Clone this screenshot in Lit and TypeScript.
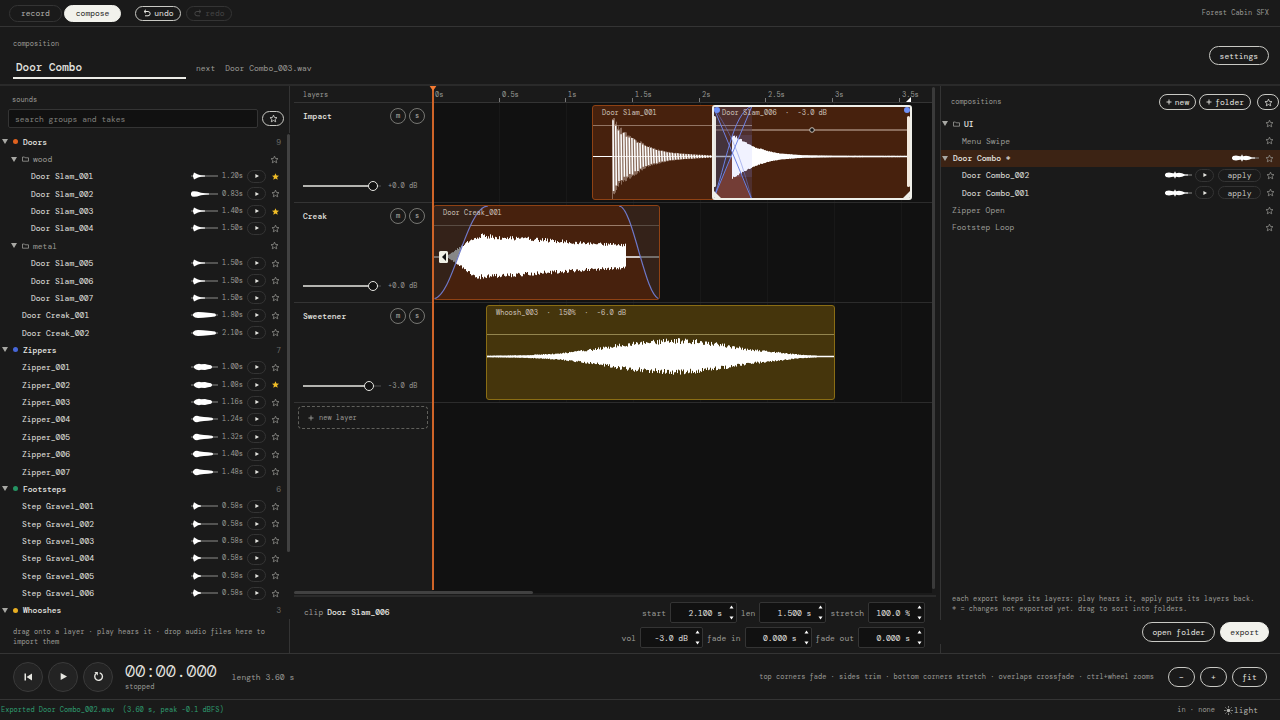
import { LitElement, html, svg, css } from "lit";
import { customElement, state } from "lit/decorators.js";
import { classMap } from "lit/directives/class-map.js";
import { styleMap } from "lit/directives/style-map.js";

type Point = [number, number];

/* ---------- icons ---------- */

const star = (on = false) => html`<svg class=${classMap({ star: true, on })} viewBox="0 0 24 24" width="9" height="9">
  <path d="M12 3l2.7 6.2 6.7.6-5.1 4.4 1.6 6.6L12 17.300l-5.900 3.500 1.600-6.600-5.100-4.400 6.700-.600z"/></svg>`;
const caret = html`<svg class="caret" viewBox="0 0 6 5" width="6" height="5"><path d="M0 0h6L3 5z"/></svg>`;
const folder = html`<svg class="folder" viewBox="0 0 7 6" width="7" height="6"><path d="M.5 1h2l.7.8h3.300v3.400h-6z"/></svg>`;
const playIcon = (size: number) => html`<svg viewBox="0 0 10 10" width=${size} height=${size}><path d="M1 0l9 5-9 5z" fill="currentColor"/></svg>`;
const plusIcon = html`<svg viewBox="0 0 6 6" width="6" height="6"><path d="M3 .5v5M.5 3h5" stroke="currentColor" stroke-width=".9" fill="none"/></svg>`;
const undoIcon = html`<svg viewBox="0 0 16 16" width="8" height="8"><path d="M6 1.500L2 5l4 3.500M2.500 5H10a4.300 4.300 0 0 1 0 8.600H4" fill="none" stroke="currentColor" stroke-width="2"/></svg>`;
const redoIcon = html`<svg viewBox="0 0 16 16" width="8" height="8"><path d="M10 1.500L14 5l-4 3.500M13.500 5H6a4.300 4.300 0 0 0 0 8.600h6" fill="none" stroke="currentColor" stroke-width="2"/></svg>`;
const startIcon = html`<svg viewBox="0 0 8 8" width="8" height="8"><path d="M.5.5h1.500v7H.5zM8 .5v7L2.500 4z" fill="currentColor"/></svg>`;
const loopIcon = html`<svg viewBox="0 0 12 12" width="11" height="11"><path d="M3.400 2.800A4.200 4.200 0 1 0 7.300 2" fill="none" stroke="currentColor" stroke-width="1.500"/><path d="M1.500 1.200h3.800V5z" fill="currentColor"/></svg>`;
const sunIcon = html`<svg viewBox="0 0 10 10" width="9" height="9"><circle cx="5" cy="5" r="2" fill="currentColor"/><path d="M5 0v2M5 8v2M0 5h2M8 5h2M1.500 1.500l1.300 1.300M7.200 7.200l1.300 1.300M1.500 8.500l1.300-1.300M7.200 2.800l1.300-1.300" stroke="currentColor" stroke-width=".8"/></svg>`;

/* ---------- waveforms ---------- */

const shapes: Record<string, Point[]> = {
  slam: [[2, 0.5], [3, 3.5], [5, 2.5], [7, 1.5], [10, 0.8], [14, 0.5]],
  burst: [[0, 1], [1, 2.5], [3, 2.7], [6, 2.5], [10, 1.3], [14, 0.7], [18, 0.5]],
  creak: [[2, 1], [4, 2.5], [7, 3], [12, 2.8], [20, 2], [24, 1.5], [25, 0.5]],
  zip: [[3, 1], [5, 2.5], [8, 3.3], [10, 2.7], [14, 3], [17, 2.3], [20, 1.7], [21, 0.5]],
  zipLong: [[2, 1], [4, 3], [6, 3.2], [9, 2.5], [13, 2], [17, 1.8], [21, 1.2], [22, 0.5]],
  step: [[2, 0.5], [3, 3.7], [5, 2.5], [7, 1.3], [10, 0.5]],
  combo: [[0, 0.5], [1, 2], [4, 2.6], [8, 1.8], [9, 1.8], [10, 3.7], [11, 1.8], [14, 2.2], [17, 1.8], [20, 0.6], [23, 0.5]],
};

const mini = (kind: string) => {
  const pts = shapes[kind];
  const top = pts.map(([x, a]) => `${x},${5 - a}`);
  const low = [...pts].reverse().map(([x, a]) => `${x},${5 + a}`);
  return html`<svg class="mini" viewBox="0 0 27 10" width="27" height="10">
    <path d="M0 5h27" stroke="#8c8c8a"/><polygon points=${[...top, ...low].join(" ")} fill="#fff"/></svg>`;
};

const noise = (n: number) => {
  const v = Math.sin(n * 127.1 + 11.7) * 43758.5453;
  return v - Math.floor(v);
};

const level = (env: Point[], x: number) => {
  for (let i = 1; i < env.length; i++) {
    const [x0, a0] = env[i - 1];
    const [x1, a1] = env[i];
    if (x <= x1) return a0 + ((a1 - a0) * (x - x0)) / (x1 - x0);
  }
  return 0;
};

/* One bar per pixel, mirrored about the centre line with separate jitter above and below. */
const bars = (env: Point[], mid: number, jitter: number) => {
  let d = "";
  for (let x = env[0][0]; x <= env[env.length - 1][0]; x++) {
    const a = level(env, x);
    const up = a * (1 + (noise(x) - 0.4) * jitter);
    const dn = a * (1 + (noise(x + 900) - 0.4) * jitter);
    d += `M${x + 0.5} ${(mid - up).toFixed(1)}V${(mid + dn).toFixed(1)}`;
  }
  return d;
};

/* Low-frequency content still shows separate cycles at this zoom. */
const cycles = (env: Point[], mid: number) => {
  let d = "";
  const end = env[env.length - 1][0];
  for (let x = env[0][0] + 1, i = 0; x <= end; x += 2.7, i++) {
    const up = level(env, x) * (0.85 + noise(i) * 0.15);
    const dn = level(env, x + 1) * (0.85 + noise(i + 50) * 0.15);
    d += `M${x.toFixed(1)} ${(mid - up).toFixed(1)}L${(x + 0.6).toFixed(1)} ${(mid + dn).toFixed(1)}`;
  }
  return d;
};

const slamOneEnv: Point[] = [[20, 40], [22, 36], [25, 29], [30, 25], [38, 20], [46, 15], [55, 10], [65, 7], [78, 4], [94, 2.5], [120, 1]];
const slamSixEnv: Point[] = [[20, 21], [26, 18], [33, 14], [43, 9], [57, 5], [68, 3], [90, 1.3], [120, 0.7], [198, 0.5]];
const creakEnv: Point[] = [[14, 1], [22, 6], [28, 10], [37, 16], [46, 20], [60, 19], [110, 16], [150, 13], [192, 11]];
const whooshEnv: Point[] = [[0, 0.6], [40, 1.2], [75, 3], [110, 7], [135, 11], [160, 13.5], [190, 15], [210, 14], [235, 11], [260, 7], [290, 4], [315, 1.5], [330, 0.8]];

/* ---------- data ---------- */

interface Take { name: string; wave: string; len: string; fav?: boolean }
type Row =
  | { kind: "group"; name: string; color: string; count: number }
  | { kind: "folder"; name: string }
  | ({ kind: "take"; deep: boolean } & Take);

const take = (name: string, wave: string, len: string, deep = false, fav = false): Row => ({ kind: "take", name, wave, len, deep, fav });

const library: Row[] = [
  { kind: "group", name: "Doors", color: "#e0621f", count: 9 },
  { kind: "folder", name: "wood" },
  take("Door Slam_001", "slam", "1.20s", true, true),
  take("Door Slam_002", "burst", "0.83s", true),
  take("Door Slam_003", "slam", "1.40s", true, true),
  take("Door Slam_004", "slam", "1.50s", true),
  { kind: "folder", name: "metal" },
  take("Door Slam_005", "slam", "1.50s", true),
  take("Door Slam_006", "slam", "1.50s", true),
  take("Door Slam_007", "slam", "1.50s", true),
  take("Door Creak_001", "creak", "1.80s"),
  take("Door Creak_002", "creak", "2.10s"),
  { kind: "group", name: "Zippers", color: "#4666d8", count: 7 },
  take("Zipper_001", "zip", "1.00s"),
  take("Zipper_002", "zip", "1.08s", false, true),
  take("Zipper_003", "zip", "1.16s"),
  take("Zipper_004", "zipLong", "1.24s"),
  take("Zipper_005", "zipLong", "1.32s"),
  take("Zipper_006", "zipLong", "1.40s"),
  take("Zipper_007", "zipLong", "1.48s"),
  { kind: "group", name: "Footsteps", color: "#259463", count: 6 },
  ...[1, 2, 3, 4, 5, 6].map((n) => take(`Step Gravel_00${n}`, "step", "0.58s")),
  { kind: "group", name: "Whooshes", color: "#e8ae22", count: 3 },
];

const PX_PER_SECOND = 400 / 3;
const at = (seconds: number) => Math.round(seconds * PX_PER_SECOND);
const ticks = [0, 0.5, 1, 1.5, 2, 2.5, 3, 3.5];

@customElement("app-root")
export class AppRoot extends LitElement {
  @state() private mode: "record" | "compose" = "compose";

  static styles = css`
    :host {
      display: grid;
      grid-template-rows: 27px 59px minmax(0, 1fr) 47px 20px;
      height: 100vh;
      box-sizing: border-box;
      background: #1a1a1a;
      color: #e6e6e1;
      font: 8px/12px "DM Mono", "Liberation Mono", monospace;
      overflow: hidden;
    }
    *, *::before, *::after { box-sizing: border-box; }
    svg { display: block; flex: none; }
    button, input { font: inherit; color: inherit; margin: 0; }
    button {
      display: inline-flex; align-items: center; justify-content: center; gap: 3px;
      background: none; border: 1px solid #c9c9c4; border-radius: 10px; padding: 0 10px;
      white-space: nowrap; flex: none;
    }
    .spacer { flex: 1; }
    .small { font-size: 7px; line-height: 10px; }
    .dim { color: #9c9c98; }
    .strong { font-weight: 500; }

    .topbar { display: flex; align-items: center; padding: 0 11px 0 9px; border-bottom: 1px solid #343434; }
    .tab { height: 17px; padding: 0 11px; border-color: #343434; color: #b4b4b0; }
    .tab.active { background: #f2f2ec; border-color: #f2f2ec; color: #1a1a1a; margin-left: 2px; }
    .history { height: 15px; width: 46px; padding: 0; margin-left: 5px; }
    .history.first { margin-left: 14px; }
    .history:disabled { border-color: #343434; color: #454545; }

    .header { display: flex; align-items: center; padding: 0 11px 0 13px; border-bottom: 2px solid #2a2a2a; }
    .naming { display: grid; grid-template-columns: 173px auto auto; column-gap: 10px; row-gap: 8px; align-items: center; padding-top: 6px; }
    .naming label { grid-column: 1 / -1; }
    .title { width: 100%; height: 22px; padding: 0 3px; border: 0; border-bottom: 2px solid #ededE8; background: none; font-size: 11px; font-weight: 500; outline: none; }
    .settings { height: 19px; }

    .main { display: grid; grid-template-columns: 290px minmax(0, 1fr) 340px; min-height: 0; }
    .sounds { display: flex; flex-direction: column; border-right: 1px solid #343434; min-height: 0; }
    .sounds h2, .comps h2 { margin: 0; font-weight: normal; }
    .sounds h2 { padding: 9px 12px 4px; }
    .search { display: flex; align-items: center; gap: 4px; padding: 0 5px 0 8px; }
    .search input { flex: 1; min-width: 0; height: 19px; padding: 0 6px; background: #111; border: 1px solid #343434; border-radius: 2px; outline: none; }
    .search input::placeholder { color: #83837f; opacity: 1; }
    .starbtn { width: 22px; height: 15px; padding: 0; }
    .star { fill: none; stroke: #92928e; stroke-width: 2; }
    .starbtn .star { stroke: #e6e6e1; }
    .star.on { fill: #f0bd27; stroke: #f0bd27; stroke-width: 0; }
    .caret { fill: #a8a8a4; }
    .folder { fill: none; stroke: #9c9c98; stroke-width: .8; }

    .list { position: relative; flex: 1; display: flex; flex-direction: column; min-height: 0; margin: 5px -1px 0 0; padding-right: 9px; background: #1a1a1a; }
    .thumb { position: absolute; right: 0; top: 1px; width: 3px; height: 86%; background: #414141; border-radius: 2px; }
    .row { flex: 1 1 0; min-height: 0; display: flex; align-items: center; }
    .row.group { padding-left: 2px; }
    .row.sub { padding-left: 11px; }
    .row.deep { padding-left: 31px; }
    .row.shallow { padding-left: 22px; }
    .dot { width: 5px; height: 5px; border-radius: 50%; margin: 0 5px 0 5px; }
    .row .folder { margin: 0 4px 0 5px; }
    .row.sub .star { margin-right: 2px; }
    .name { flex: 1; white-space: nowrap; }
    .count { color: #6c6c69; }
    .len { width: 25px; text-align: right; }
    .play { width: 19px; height: 13px; padding: 0; border-color: #343434; margin: 0 5px 0 4px; }
    .row .play + .star { margin-right: 1px; }
    .hint { margin: 0; padding: 8px 8px 6px 13px; }

    .centre { display: flex; flex-direction: column; min-width: 0; padding-left: 4px; }
    .timeline { position: relative; flex: 1; display: grid; grid-template-columns: 139px minmax(0, 1fr); grid-template-rows: 17px 100px 100px 100px minmax(0, 1fr); margin-right: 8px; min-height: 0; overflow: hidden; }
    .corner { padding: 4px 9px 0; border-bottom: 1px solid #343434; }
    .ruler { position: relative; border-bottom: 1px solid #343434; }
    .tick { position: absolute; bottom: 0; height: 100%; padding: 4px 0 0 3px; }
    .tick::before { content: ""; position: absolute; left: 0; bottom: 0; width: 1px; height: 4px; background: #777; }
    .endmark { position: absolute; bottom: 0; width: 5px; height: 5px; background: #fff; clip-path: polygon(100% 0, 100% 100%, 0 100%); }
    .strip { display: flex; flex-direction: column; justify-content: space-between; padding: 5px 8px 10px 9px; border-bottom: 1px solid #343434; }
    .striprow { display: flex; align-items: center; gap: 3px; }
    .round { width: 16px; height: 16px; padding: 0; border-color: #777773; border-radius: 50%; font-size: 7px; color: #b4b4b0; }
    .striprow output { padding-left: 4px; }
    .fader { appearance: none; width: 78px; height: 12px; background: none; }
    .fader::-webkit-slider-runnable-track { height: 2px; background: linear-gradient(90deg, #b4b4b0 var(--level), #343434 var(--level)); }
    .fader::-webkit-slider-thumb { appearance: none; width: 10px; height: 10px; margin-top: -4px; border: 1px solid #e6e6e1; border-radius: 50%; background: #111; }
    .lane { position: relative; border-bottom: 1px solid #2c2c2c; background: repeating-linear-gradient(90deg, transparent 0 66px, #181818 66px 67px) #111; overflow: hidden; }
    .newcell { padding: 3px 5px 0 4px; }
    .newlayer { width: 100%; height: 23px; justify-content: flex-start; gap: 5px; padding: 0 9px; border: 1px dashed #60605c; border-radius: 4px; color: #9c9c98; }
    .empty { background: #111; }
    .clip { position: absolute; top: 2px; height: 95px; border: 1px solid #8f4214; border-radius: 3px; background: #47210d; overflow: hidden; }
    .clip.yellow { background: #45350c; border-color: #8a6d14; }
    .clip.selected { border: 2px solid #efefe9; }
    .clip span { position: absolute; left: 9px; top: 2px; white-space: pre; color: #cfc4bc; }
    .clip.selected span { left: 8px; top: 1px; }
    .clip svg { position: absolute; left: -1px; top: -1px; }
    .clip.selected svg { left: -2px; top: -2px; }
    .playhead { position: absolute; left: 138px; top: 0; bottom: 3px; width: 2px; background: #cf6428; }
    .playhead::before { content: ""; position: absolute; left: -3px; top: -1px; width: 8px; height: 6px; background: #f47a33; clip-path: polygon(0 0, 100% 0, 50% 100%); }
    .scrollarea { position: relative; flex: 1; display: flex; flex-direction: column; min-height: 0; }
    .scrollv { position: absolute; right: 5px; top: 1px; bottom: 5px; width: 3px; border-radius: 2px; background: #3a3a3a; }
    .scrollh { width: 37%; height: 3px; border-radius: 2px; background: #414141; margin-top: -2px; z-index: 1; }

    .inspector { display: flex; align-items: flex-start; padding: 5px 15px 5px 10px; margin-right: 4px; border-top: 2px solid #2a2a2a; margin-top: 1px; }
    .inspector .what { padding-top: 4px; }
    .what b { margin-left: 4px; font-weight: 500; }
    .fields { flex: 1; display: flex; flex-direction: column; gap: 4px; margin-right: -4px; }
    .fieldrow { display: flex; justify-content: flex-end; align-items: center; gap: 4px; }
    .field { display: flex; align-items: center; width: 67px; height: 21px; padding-right: 2px; background: #111; border: 1px solid #343434; border-radius: 2px; }
    .field.mid { width: 63px; }
    .field.narrow { width: 57px; }
    .field input { flex: 1; min-width: 0; width: 0; padding: 0 7px 0 0; border: 0; background: none; text-align: right; outline: none; }
    .steps { display: flex; flex-direction: column; gap: 7px; }
    .steps button { width: 5px; height: 4px; padding: 0; border: 0; }

    .comps { display: flex; flex-direction: column; border-left: 1px solid #343434; min-height: 0; }
    .compshead { display: flex; align-items: center; gap: 3px; padding: 8px 1px 0 10px; }
    .compshead h2 { flex: 1; }
    .compshead button { height: 16px; padding: 0 6px; gap: 3px; }
    .compshead .starbtn { width: 22px; padding: 0; margin-left: 3px; }
    .tree { display: grid; grid-auto-rows: 1fr; height: 121px; margin-top: 5px; }
    .node { display: flex; align-items: center; padding: 0 6px 0 11px; }
    .node.open { padding-left: 1px; }
    .node.child { padding-left: 21px; }
    .node .folder { margin: 0 4px 0 5px; }
    .node.open .caret + .name { padding-left: 5px; }
    .node.current { background: #3c2314; }
    .node .mini { margin-right: 6px; }
    .node.export { padding-right: 5px; }
    .node.export .mini { margin-right: 3px; }
    .node .play { margin: 0 4px 0 0; }
    .node .apply { height: 13px; width: 43px; padding: 0; border-color: #343434; margin-right: 5px; color: #c9c9c4; }
    .comphint { padding: 0 11px 6px; margin: auto 0 0; }
    .actions { display: flex; justify-content: flex-end; gap: 5px; margin: 0 0 9px -1px; padding: 2px 11px 2px 0; background: #1a1a1a; }
    .actions button { height: 20px; padding: 0 9px; }
    .actions .primary { background: #f2f2ec; border-color: #f2f2ec; color: #1a1a1a; }

    .transport { display: flex; align-items: center; padding: 0 13px; border-top: 1px solid #343434; border-bottom: 1px solid #343434; }
    .disc { width: 30px; height: 30px; padding: 0; border-radius: 50%; border-color: #3a3a3a; background: #232323; margin-right: 5px; }
    .clock { margin: 0 15px 0 7px; }
    .clock time { display: block; font-size: 17px; line-height: 20px; font-weight: 300; }
    .clock .small { display: block; padding-top: 1px; }
    .transport .tips { margin-right: 14px; }
    .zoom { height: 20px; width: 27px; padding: 0; margin-right: 5px; }
    .zoom.fit { width: 35px; margin-right: 0; }

    .status { display: flex; align-items: center; padding: 0 22px 0 1px; }
    .status .ok { color: #2f9f72; white-space: pre; }
    .theme { border: 0; padding: 0; gap: 1px; margin-left: 9px; color: #b4b4b0; }
  `;

  private playButton() {
    return html`<button class="play" aria-label="play">${playIcon(4)}</button>`;
  }

  private libraryRow(row: Row) {
    if (row.kind === "group")
      return html`<div class="row group">${caret}<i class="dot" style=${styleMap({ background: row.color })}></i>
        <span class="name strong">${row.name}</span><span class="count">${row.count}</span></div>`;
    if (row.kind === "folder")
      return html`<div class="row sub">${caret}${folder}<span class="name dim">${row.name}</span>${star()}</div>`;
    return html`<div class="row ${row.deep ? "deep" : "shallow"}"><span class="name">${row.name}</span>
      ${mini(row.wave)}<span class="len small dim">${row.len}</span>${this.playButton()}${star(row.fav)}</div>`;
  }

  private strip(name: string, db: string, value: number) {
    const id = `fader-${name.toLowerCase()}`;
    return html`<div class="strip">
      <div class="striprow"><span class="name strong">${name}</span>
        <button class="round" aria-label="mute ${name}">m</button><button class="round" aria-label="solo ${name}">s</button></div>
      <div class="striprow"><input class="fader" id=${id} type="range" min="0" max="100" .value=${String(value)}
          aria-label="${name} volume" style=${styleMap({ "--level": `${value}%` })}>
        <output class="small dim" for=${id}>${db}</output></div>
    </div>`;
  }

  private clip(label: string, start: number, width: number, kind: string, body: unknown) {
    return html`<div class="clip ${kind}" style=${styleMap({ left: `${start}px`, width: `${width}px` })}>
      <svg viewBox="0 0 ${width} 96" width=${width} height="96">${body}</svg>
      <span class="small">${label}</span></div>`;
  }

  private impactLane() {
    return html`<div class="lane">
      ${this.clip("Door Slam_001", at(1.2) - 1, at(1.2) + 1, "", svg`
        <path d="M0 20.500h160" stroke="#927564" />
        <path d="M0 51.500h160" stroke="#fff" stroke-width="1.200"/>
        <path d=${bars(slamOneEnv, 51.5, 0.2)} stroke="#c9b4a8" opacity=".5" fill="none"/>
        <path d=${cycles(slamOneEnv, 51.5)} stroke="#fff" stroke-width="1.500" fill="none"/>`)}
      ${this.clip("Door Slam_006  ·  -3.0 dB", at(2.1) - 1, at(1.5), "selected", svg`
        <path d="M40 25h155" stroke="#a08676" stroke-width="1.500"/>
        <path d="M0 51.500h198" stroke="#fff" stroke-width="1.500"/>
        <path d="M1 1h39v94H1z" fill="#7d88ee" opacity=".14"/>
        <path d="M1 1L20 50 1 95z" fill="#303b55" opacity=".35"/>
        <path d="M1 95L20 50 40 95z" fill="#c8614b" opacity=".3"/>
        <path d=${bars(slamSixEnv, 51.5, 0.12)} stroke="#fff" fill="none"/>
        <path d="M20 30h20v42H20z" fill="#8c96ff" opacity=".12"/>
        <path d="M1 20.500h39M1 25h39" stroke="#927f80"/>
        <g fill="none" stroke="#6d82e4"><path d="M1 1L40 95"/><path d="M1 95L40 1"/><path d="M1 95C14 62 20 8 40 1"/><path d="M1 1C20 30 28 50 40 95" opacity=".5"/></g>
        <path d="M2 94v-8l8 8zM198 94v-8l-8 8z" fill="#efefe9"/>
        <rect x="1" y="11" width="3" height="71" rx="1.500" fill="#e8e6e2"/>
        <rect x="195" y="11" width="3" height="71" rx="1.500" fill="#f3e9dd"/>
        <circle cx="5" cy="5" r="3" fill="#6f90f5"/><circle cx="195" cy="5" r="3" fill="#6f90f5"/>
        <circle cx="100" cy="25" r="2.300" fill="#111" stroke="#c8c0b8"/>`)}
    </div>`;
  }

  private creakLane() {
    return html`<div class="lane">
      ${this.clip("Door Creak_001", 0, at(1.7), "", svg`
        <path d="M0 20.500h227" stroke="#9a7c69"/>
        <path d="M0 52h227" stroke="#fff" stroke-width="1.300"/>
        <path d=${bars(creakEnv, 51.5, 0.28)} stroke="#fff" fill="none"/>
        <path d="M0 0H55C33 0 20 94 0 94z" fill="#242424" opacity=".55"/>
        <path d="M227 0H186C200 0 212 94 227 94z" fill="#242424" opacity=".55"/>
        <path d="M0 94C20 94 33 1 55 1M186 1C200 1 212 94 227 94" fill="none" stroke="#6d78c8" stroke-width="1.200"/>
        <rect x="6" y="46" width="9" height="12" rx="1.500" fill="#efefe4"/><path d="M13 48v8l-4-4z" fill="#111"/>`)}
    </div>`;
  }

  private whooshLane() {
    return html`<div class="lane">
      ${this.clip("Whoosh_003  ·  150%  ·  -6.0 dB", at(0.4), 349, "yellow", svg`
        <path d="M0 29.500h349" stroke="#93854f"/>
        <path d="M0 51.500h349" stroke="#fff" stroke-width="1.300"/>
        <path d=${bars(whooshEnv, 51.5, 0.4)} stroke="#fff" fill="none"/>`)}
    </div>`;
  }

  private field(label: string, value: string, size = "") {
    const id = label.replace(" ", "-");
    return html`<label class="dim" for=${id}>${label}</label>
      <span class="field ${size}"><input id=${id} .value=${value}>
        <span class="steps">
          <button aria-label="increase ${label}"><svg viewBox="0 0 5 4" width="5" height="4"><path d="M.5 3.500L2.500.5l2 3z" fill="#fff"/></svg></button>
          <button aria-label="decrease ${label}"><svg viewBox="0 0 5 4" width="5" height="4"><path d="M.5.5l2 3 2-3z" fill="#fff"/></svg></button>
        </span></span>`;
  }

  private exported(name: string) {
    return html`<div class="node child export"><span class="name">${name}</span>${mini("combo")}
      ${this.playButton()}<button class="apply">apply</button>${star()}</div>`;
  }

  render() {
    return html`
      <nav class="topbar">
        ${(["record", "compose"] as const).map((m) => html`<button class=${classMap({ tab: true, active: this.mode === m })}
          @click=${() => (this.mode = m)}>${m}</button>`)}
        <button class="history first">${undoIcon}undo</button>
        <button class="history" disabled>${redoIcon}redo</button>
        <span class="spacer"></span><span class="small dim">Forest Cabin SFX</span>
      </nav>

      <header class="header">
        <div class="naming">
          <label class="small dim" for="title">composition</label>
          <input class="title" id="title" .value=${"Door Combo"}>
          <span class="dim">next</span><span class="dim">Door Combo_003.wav</span>
        </div>
        <span class="spacer"></span><button class="settings">settings</button>
      </header>

      <main class="main">
        <section class="sounds">
          <h2 class="small dim">sounds</h2>
          <div class="search"><input type="text" aria-label="search" placeholder="search groups and takes">
            <button class="starbtn" aria-label="favourites only">${star()}</button></div>
          <div class="list">${library.map((r) => this.libraryRow(r))}<i class="thumb"></i></div>
          <p class="hint small dim">drag onto a layer · play hears it · drop audio files here to import them</p>
        </section>

        <section class="centre">
          <div class="scrollarea">
            <div class="timeline">
              <div class="corner small dim">layers</div>
              <div class="ruler small dim">
                ${ticks.map((t) => html`<span class="tick" style=${styleMap({ left: `${at(t) - 1}px` })}>${t}s</span>`)}
                <i class="endmark" style=${styleMap({ left: `${at(3.6) - 7}px` })}></i>
              </div>
              ${this.strip("Impact", "+0.0 dB", 96)}${this.impactLane()}
              ${this.strip("Creak", "+0.0 dB", 96)}${this.creakLane()}
              ${this.strip("Sweetener", "-3.0 dB", 90)}${this.whooshLane()}
              <div class="newcell"><button class="newlayer small">${plusIcon}new layer</button></div>
              <div class="empty"></div>
              <i class="playhead"></i>
            </div>
            <i class="scrollv"></i>
            <div class="scrollh"></div>
          </div>
          <div class="inspector">
            <span class="what"><span class="dim">clip</span><b>Door Slam_006</b></span>
            <div class="fields">
              <div class="fieldrow">${this.field("start", "2.100 s")}${this.field("len", "1.500 s")}${this.field("stretch", "100.0 %", "narrow")}</div>
              <div class="fieldrow">${this.field("vol", "-3.0 dB", "mid")}${this.field("fade in", "0.000 s")}${this.field("fade out", "0.000 s")}</div>
            </div>
          </div>
        </section>

        <section class="comps">
          <div class="compshead"><h2 class="small dim">compositions</h2>
            <button>${plusIcon}new</button><button>${plusIcon}folder</button>
            <button class="starbtn" aria-label="favourites only">${star()}</button></div>
          <div class="tree">
            <div class="node open">${caret}${folder}<span class="name strong">UI</span>${star()}</div>
            <div class="node child"><span class="name dim">Menu Swipe</span>${star()}</div>
            <div class="node open current">${caret}<span class="name strong">Door Combo *</span>${mini("combo")}${star()}</div>
            ${this.exported("Door Combo_002")}${this.exported("Door Combo_001")}
            <div class="node"><span class="name dim">Zipper Open</span>${star()}</div>
            <div class="node"><span class="name dim">Footstep Loop</span>${star()}</div>
          </div>
          <p class="comphint small dim">each export keeps its layers: play hears it, apply puts its layers back.<br>* = changes not exported yet. drag to sort into folders.</p>
          <div class="actions"><button>open folder</button><button class="primary">export</button></div>
        </section>
      </main>

      <section class="transport">
        <button class="disc" aria-label="to start">${startIcon}</button>
        <button class="disc" aria-label="play">${playIcon(7)}</button>
        <button class="disc" aria-label="loop">${loopIcon}</button>
        <div class="clock"><time>00:00.000</time><span class="small dim">stopped</span></div>
        <span class="dim">length 3.60 s</span>
        <span class="spacer"></span>
        <span class="tips small dim">top corners fade · sides trim · bottom corners stretch · overlaps crossfade · ctrl+wheel zooms</span>
        <button class="zoom" aria-label="zoom out">−</button><button class="zoom" aria-label="zoom in">+</button><button class="zoom fit">fit</button>
      </section>

      <footer class="status">
        <span class="ok small">Exported Door Combo_002.wav  (3.60 s, peak -0.1 dBFS)</span>
        <span class="spacer"></span><span class="small dim">in · none</span>
        <button class="theme">${sunIcon}light</button>
      </footer>`;
  }
}
